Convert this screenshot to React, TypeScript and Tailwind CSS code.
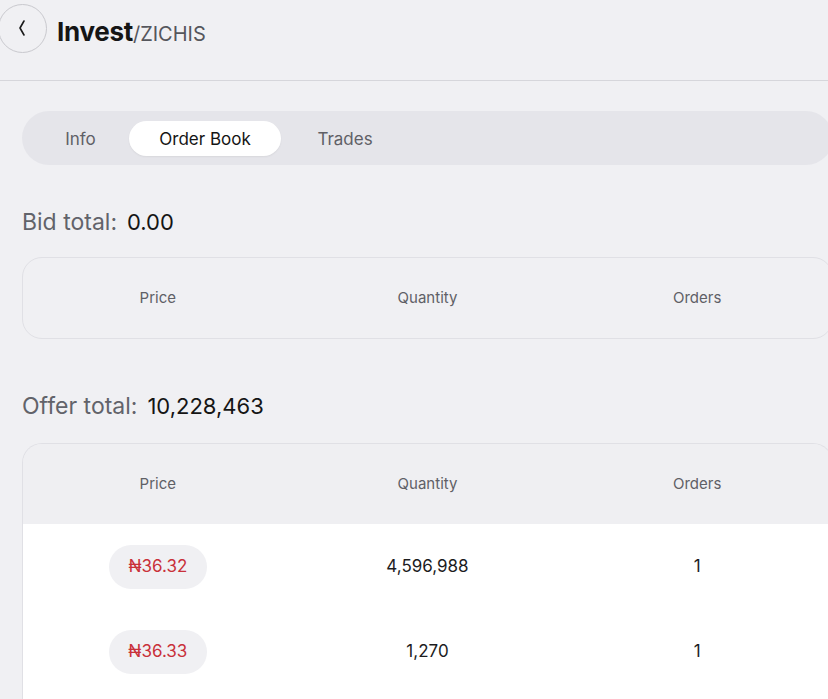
import React from "react";

const font = { fontFamily: "Inter, 'Noto Sans', sans-serif" };

function TableHeader() {
  return (
    <div className="grid grid-cols-3 h-[80px] items-center text-[15px] text-[#5f6066] text-center">
      <div>Price</div>
      <div>Quantity</div>
      <div>Orders</div>
    </div>
  );
}

function Row({ price, qty, orders }: { price: string; qty: string; orders: string }) {
  return (
    <div className="grid grid-cols-3 h-[85px] items-center text-center text-[17px] text-[#1c1c1e]">
      <div className="flex justify-center">
        <span className="inline-flex items-center justify-center w-[98px] h-[44px] rounded-full bg-[#f0f0f3] text-[#c9313a]">
          {price}
        </span>
      </div>
      <div>{qty}</div>
      <div>{orders}</div>
    </div>
  );
}

export default function App() {
  return (
    <div className="w-[828px] h-[699px] overflow-hidden bg-[#f0f0f3]" style={font}>
      <div className="h-[81px] border-b border-[#d6d6db] flex items-start">
        <div className="ml-[-2px] mt-[4px] w-[49px] h-[49px] rounded-full border border-[#c9c9ce] flex items-center justify-center">
          <svg width="10" height="18" viewBox="0 0 10 18" fill="none" className="ml-[-2px] mb-[2px]">
            <path d="M7 2 L3 9 L7 16" stroke="#1a1a1a" strokeWidth="1.6" strokeLinecap="round" strokeLinejoin="round" />
          </svg>
        </div>
        <div className="ml-[10px] mt-[12px] flex items-baseline">
          <span className="text-[26px] font-bold text-[#151515] tracking-[-0.3px]">Invest</span>
          <span className="text-[20px] text-[#55565c]">/ZICHIS</span>
        </div>
      </div>

      <div className="pl-[22px] w-[833px]">
        <div className="mt-[30px] h-[54px] rounded-full bg-[#e5e5ea] flex items-center px-[10px] text-[17px]">
          <div className="w-[97px] text-center text-[#5f6066] pt-[3px]">Info</div>
          <div className="w-[152px] h-[35px] rounded-full bg-white flex items-center justify-center text-[#151515] pt-[3px] shadow-[0_1px_2px_rgba(0,0,0,0.06)]">
            Order Book
          </div>
          <div className="w-[128px] text-center text-[#5f6066] pt-[3px]">Trades</div>
        </div>

        <div className="mt-[46px] flex items-baseline leading-none">
          <span className="text-[23px] text-[#62636a]">Bid total:</span>
          <span className="ml-[10px] text-[22px] text-[#151515]">0.00</span>
        </div>

        <div className="mt-[23px] rounded-[20px] border border-[#e0e0e5] bg-[#f0f0f3]">
          <TableHeader />
        </div>

        <div className="mt-[56px] flex items-baseline leading-none">
          <span className="text-[23px] text-[#62636a]">Offer total:</span>
          <span className="ml-[10px] text-[22px] text-[#151515]">10,228,463</span>
        </div>

        <div className="mt-[25px] rounded-t-[20px] border border-b-0 border-[#e0e0e5] overflow-hidden">
          <div className="bg-[#efeff2]">
            <TableHeader />
          </div>
          <div className="bg-white pb-[40px]">
            <Row price="₦36.32" qty="4,596,988" orders="1" />
            <Row price="₦36.33" qty="1,270" orders="1" />
          </div>
        </div>
      </div>
    </div>
  );
}
